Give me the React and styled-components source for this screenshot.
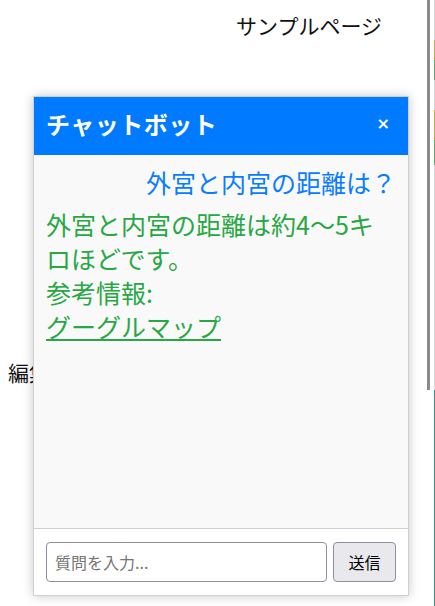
import React, { useState } from 'react'
import styled, { createGlobalStyle } from 'styled-components'

const GlobalStyle = createGlobalStyle`
  html, body {
    margin: 0;
    padding: 0;
    background: #fff;
    overflow: hidden;
  }
  body {
    font-family: "Noto Sans CJK JP", "Noto Sans", sans-serif;
  }
`

const Page = styled.div`
  display: flex;
  width: 435px;
  height: 606px;
`

const Content = styled.main`
  flex: 1;
  padding: 0 8px;
  color: #111;
`

const PageTitle = styled.div`
  display: flex;
  justify-content: flex-end;
  padding: 10px 37px 0 0;
  font-size: 21px;
  line-height: 30px;
`

const EditText = styled.p`
  margin: 317px 0 0;
  font-size: 21px;
  line-height: 30px;
`

const Rule = styled.div`
  width: 3px;
  height: 390px;
  background: #8a8a8a;
`

const Edge = styled.div`
  width: 1px;
  margin-left: 4px;
  background: linear-gradient(
    to bottom,
    #d6d6d6 0 40px,
    #c9a64a 40px 60px,
    #5aa86e 60px 80px,
    #d6d6d6 80px 110px,
    #c9a64a 110px 140px,
    #5aa86e 140px 165px,
    #d6d6d6 165px 390px,
    #3c8c8c 390px
  );
`

const Panel = styled.section`
  position: fixed;
  left: 33px;
  top: 96px;
  width: 376px;
  height: 500px;
  display: flex;
  flex-direction: column;
  background: #fff;
  border: 1px solid #d0d0d0;
  box-sizing: border-box;
  box-shadow: 0 0 10px rgba(0, 0, 0, 0.22);
`

const Header = styled.header`
  display: flex;
  align-items: center;
  justify-content: space-between;
  height: 58px;
  box-sizing: border-box;
  padding: 0 12px 5px;
  background: #007bff;
  color: #fff;
`

const Title = styled.h2`
  margin: 0;
  font-size: 24px;
  font-weight: 700;
  letter-spacing: 0.5px;
`

const Close = styled.button`
  border: 0;
  background: none;
  color: #fff;
  font-size: 16px;
  font-weight: 700;
  padding: 0 6px 0 0;
  cursor: pointer;
  font-family: "DejaVu Sans", sans-serif;
`

const Messages = styled.div`
  flex: 1;
  display: flex;
  flex-direction: column;
  gap: 8px;
  padding: 10px 12px;
  background: #f9f9f9;
  font-size: 25px;
  line-height: 34px;
`

const Bubble = styled.div`
  color: ${p => (p.$user ? '#0a7cff' : '#28a745')};
  text-align: ${p => (p.$user ? 'right' : 'left')};
  a {
    color: inherit;
  }
`

const Footer = styled.form`
  display: flex;
  gap: 6px;
  padding: 13px 12px 13px;
  border-top: 1px solid #cfcfcf;
  background: #fff;
`

const Input = styled.input`
  flex: 1;
  height: 40px;
  box-sizing: border-box;
  padding: 0 8px;
  border: 1px solid #8f8f9d;
  border-radius: 4px;
  font-size: 16px;
  font-family: inherit;
  &::placeholder {
    color: #757575;
  }
`

const Send = styled.button`
  width: 63px;
  height: 40px;
  border: 1px solid #8f8f9d;
  border-radius: 4px;
  background: #e9e9ed;
  color: #000;
  font-size: 16px;
  font-family: inherit;
`

export default function App() {
  const [text, setText] = useState('')
  return (
    <>
      <GlobalStyle />
      <Page>
        <Content>
          <PageTitle>サンプルページ</PageTitle>
          <EditText>編集</EditText>
        </Content>
        <Rule />
        <Edge />
      </Page>
      <Panel>
        <Header>
          <Title>チャットボット</Title>
          <Close aria-label="閉じる">×</Close>
        </Header>
        <Messages>
          <Bubble $user>外宮と内宮の距離は？</Bubble>
          <Bubble>
            外宮と内宮の距離は約4〜5キロほどです。
            <br />
            参考情報:
            <br />
            <a href="#map">グーグルマップ</a>
          </Bubble>
        </Messages>
        <Footer onSubmit={e => e.preventDefault()}>
          <Input
            placeholder="質問を入力..."
            value={text}
            onChange={e => setText(e.target.value)}
          />
          <Send type="submit">送信</Send>
        </Footer>
      </Panel>
    </>
  )
}
